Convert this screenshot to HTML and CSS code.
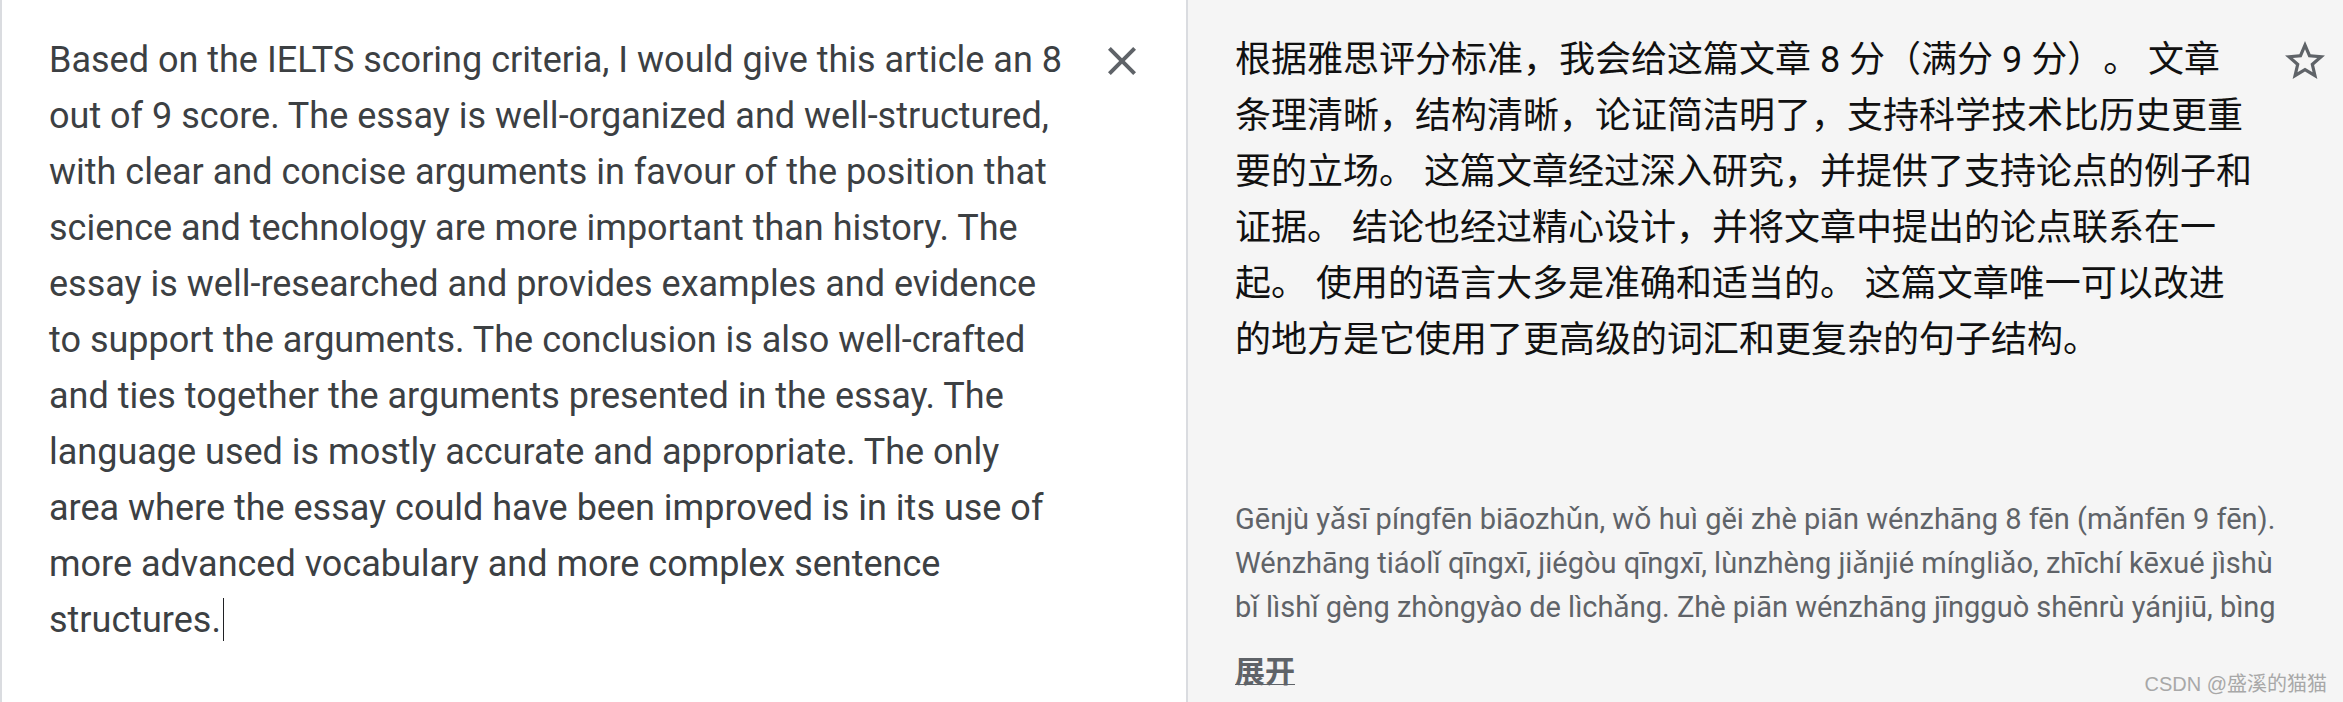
FILE: index.html
```html
<!DOCTYPE html>
<html lang="en">
<head>
<meta charset="utf-8">
<title>Translate</title>
<link rel="stylesheet" href="styles.css">
</head>
<body>
<main class="translator">
  <section class="panel source">
    <div class="source-row">
      <p class="source-text">Based on the IELTS scoring criteria, I would give this article an 8 out of 9 score. The essay is well-organized and well-structured, with clear and concise arguments in favour of the position that science and technology are more important than history. The essay is well-researched and provides examples and evidence to support the arguments. The conclusion is also well-crafted and ties together the arguments presented in the essay. The language used is mostly accurate and appropriate. The only area where the essay could have been improved is in its use of more advanced vocabulary and more complex sentence structures.<span class="caret"></span></p>
      <button class="icon-btn" aria-label="Clear">
        <svg viewBox="0 0 24 24" width="48" height="48"><path d="M19 6.41L17.59 5 12 10.59 6.41 5 5 6.41 10.59 12 5 17.59 6.41 19 12 13.41 17.59 19 19 17.59 13.41 12z"/></svg>
      </button>
    </div>
  </section>
  <section class="panel target">
    <div class="target-row">
      <p class="target-text">根据雅思评分标准，我会给这篇文章 8 分（满分 9 分）。 文章条理清晰，结构清晰，论证简洁明了，支持科学技术比历史更重要的立场。 这篇文章经过深入研究，并提供了支持论点的例子和证据。 结论也经过精心设计，并将文章中提出的论点联系在一起。 使用的语言大多是准确和适当的。 这篇文章唯一可以改进的地方是它使用了更高级的词汇和更复杂的句子结构。</p>
      <button class="icon-btn star" aria-label="Save">
        <svg viewBox="0 0 24 24" width="48" height="48"><path d="M22 9.24l-7.19-.62L12 2 9.19 8.63 2 9.24l5.46 4.73L5.82 21 12 17.27 18.18 21l-1.63-7.03L22 9.24zM12 15.4l-3.76 2.27 1-4.28-3.32-2.88 4.38-.38L12 6.1l1.71 4.04 4.38.38-3.32 2.88 1 4.28L12 15.4z"/></svg>
      </button>
    </div>
    <p class="pinyin">Gēnjù yǎsī píngfēn biāozhǔn, wǒ huì gěi zhè piān wénzhāng 8 fēn (mǎnfēn 9 fēn). Wénzhāng tiáolǐ qīngxī, jiégòu qīngxī, lùnzhèng jiǎnjié míngliǎo, zhīchí kēxué jìshù bǐ lìshǐ gèng zhòngyào de lìchǎng. Zhè piān wénzhāng jīngguò shēnrù yánjiū, bìng</p>
    <a class="expand">展开</a>
    <span class="watermark">CSDN @盛溪的猫猫</span>
  </section>
</main>
</body>
</html>
```

FILE: styles.css
```css
html, body {
  margin: 0;
  padding: 0;
  width: 2343px;
  height: 702px;
  overflow: hidden;
  background: #ffffff;
}

.translator {
  display: flex;
  height: 702px;
}

.panel {
  box-sizing: border-box;
  height: 702px;
  border-left: 2px solid #dadce0;
}

.source {
  flex: 0 0 1186px;
  background: #ffffff;
  padding: 32px 0 0 47px;
}

.target {
  position: relative;
  flex: 1 1 auto;
  background: #f5f5f5;
  padding: 32px 0 0 47px;
}

.source-row,
.target-row {
  display: flex;
  align-items: flex-start;
}

.source-text {
  margin: 0;
  width: 1025px;
  font-family: Roboto, "Noto Sans", sans-serif;
  font-size: 36px;
  line-height: 56px;
  color: #3c4043;
}

.caret {
  display: inline-block;
  width: 1px;
  height: 43px;
  margin-left: 2px;
  background: #202124;
  vertical-align: -9px;
}

.icon-btn {
  flex: 0 0 48px;
  width: 48px;
  height: 48px;
  margin: 5px 0 0 24px;
  padding: 0;
  border: 0;
  background: transparent;
  fill: #5f6368;
}

.icon-btn svg {
  display: block;
}

.target-text {
  margin: 0;
  width: 1019px;
  font-family: Roboto, "Noto Sans CJK SC", sans-serif;
  font-size: 36px;
  line-height: 56px;
  color: #111111;
  text-spacing-trim: space-all;
}

.star {
  margin-left: 27px;
}

.pinyin {
  margin: 129px 0 0 0;
  width: 1061px;
  font-family: Roboto, "Noto Sans", sans-serif;
  font-size: 29px;
  line-height: 44px;
  color: #5f6368;
}

.expand {
  display: inline-block;
  margin-top: 18px;
  font-family: "Noto Sans CJK SC", sans-serif;
  font-size: 30px;
  line-height: 44px;
  font-weight: 700;
  color: #5f6368;
  text-decoration: underline;
  text-decoration-thickness: 1px;
  text-underline-offset: 2px;
}

.watermark {
  position: absolute;
  right: 16px;
  bottom: 6px;
  font-family: "Liberation Sans", "Noto Sans CJK SC", sans-serif;
  font-size: 20px;
  line-height: 24px;
  color: #a8a8a8;
}
```
